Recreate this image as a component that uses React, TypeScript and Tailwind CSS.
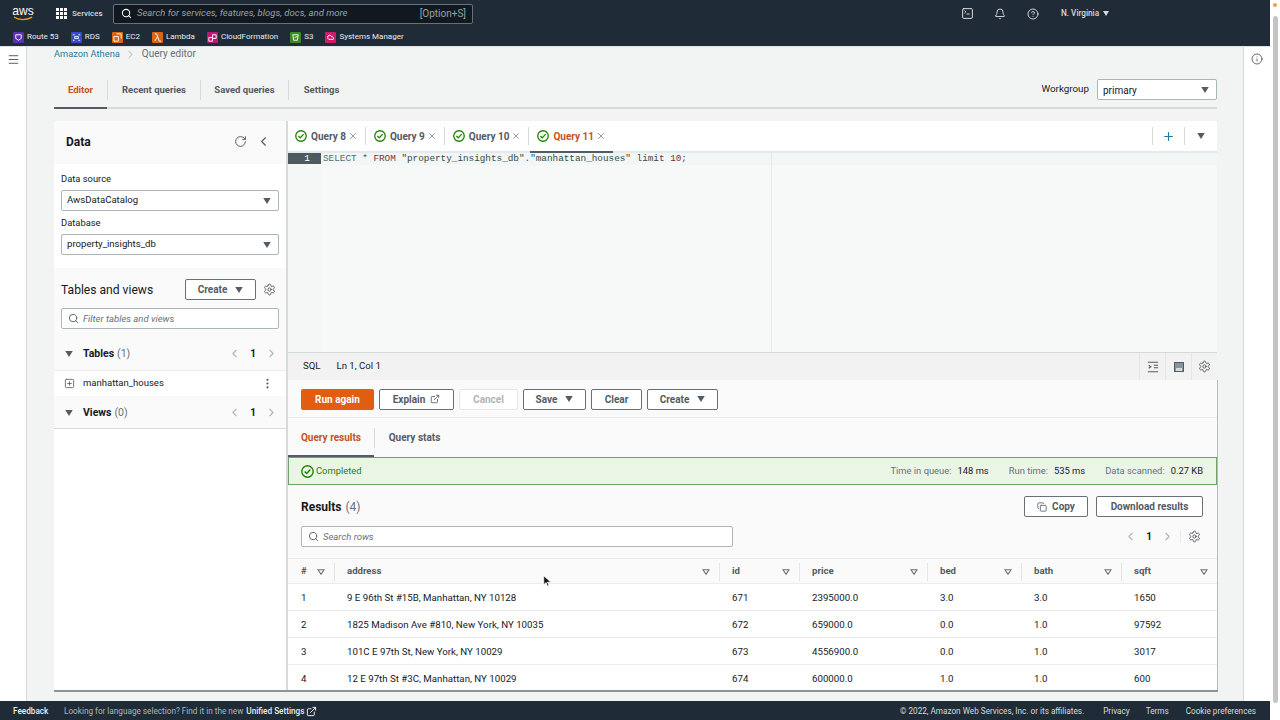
import React from "react";
import { Bell, ChevronLeft, ChevronRight, CircleHelp, Copy, EllipsisVertical, ExternalLink, Info, Menu, Plus, RotateCw, Search, Settings, SquarePlus, SquareTerminal, X } from "lucide-react";

const Caret = ({ className = "" }: { className?: string }) => (
    <svg viewBox="0 0 10 8" className={`w-[8px] h-[6px] fill-[#545b64] ${className}`}>
        <path d="M0 0h10L5 8z" />
    </svg>
);

const SortCaret = () => (
    <svg viewBox="0 0 10 8" className="w-[8px] h-[6px] fill-none stroke-[#687078] stroke-[1.5]">
        <path d="M1 1h8L5 7z" />
    </svg>
);

const CheckCircle = ({ className = "w-[13px] h-[13px]" }: { className?: string }) => (
    <svg viewBox="0 0 16 16" className={`${className} fill-none stroke-[#1d8102] stroke-[1.7]`}>
        <circle cx="8" cy="8" r="7" />
        <path d="M4.5 8l2.5 2.5 4.5-5" />
    </svg>
);

const Gear = () => <Settings size={13} strokeWidth={1.8} className="text-[#545b64]" />;

const Btn = ({ children, className = "" }: { children: React.ReactNode; className?: string }) => (
    <div className={`h-[21px] flex items-center justify-center gap-[5px] rounded-[2px] border border-[#687078] bg-white text-[10px] font-bold text-[#545b64] ${className}`}>
        {children}
    </div>
);

const Select = ({ value }: { value: string }) => (
    <div className="h-[21px] flex items-center justify-between pl-[5px] pr-[7px] rounded-[2px] border border-[#aab7b8] bg-white text-[9.6px] text-[#16191f]">
        <span>{value}</span>
        <Caret />
    </div>
);

const Pager = () => (
    <div className="flex items-center gap-[9px] text-[#aab7b8]">
        <ChevronLeft size={13} />
        <span className="text-[10px] font-bold text-[#16191f]">1</span>
        <ChevronRight size={13} />
    </div>
);

const services = [
    { name: "Route 53", bg: "bg-[#5a30b5]", d: "M3 3h6v4l-3 2-3-2z" },
    { name: "RDS", bg: "bg-[#3b48cc]", d: "M2 3h2M8 3h2M2 9h2M8 9h2M4 5h4v2H4z" },
    { name: "EC2", bg: "bg-[#d86613]", d: "M5 2h5v5M2 5h5v5H2z" },
    { name: "Lambda", bg: "bg-[#d86613]", d: "M3 2h2l3 8h2M6 5l-3 5" },
    { name: "CloudFormation", bg: "bg-[#c7156f]", d: "M2 6h4v4H2zM6 3h4v4H6z" },
    { name: "S3", bg: "bg-[#3f8624]", d: "M3 3h6l-1 6H4zM5 6l3-1" },
    { name: "Systems Manager", bg: "bg-[#d1186b]", d: "M3 6a2 2 0 0 1 4-1 2 2 0 0 1 2 3H4a2 2 0 0 1-1-2z" },
];

const tabs = [
    { name: "Query 8", active: false },
    { name: "Query 9", active: false },
    { name: "Query 10", active: false },
    { name: "Query 11", active: true },
];

const columns = [
    { name: "#", w: "w-[46px]" },
    { name: "address", w: "w-[385px]" },
    { name: "id", w: "w-[80px]" },
    { name: "price", w: "w-[128px]" },
    { name: "bed", w: "w-[94px]" },
    { name: "bath", w: "w-[100px]" },
    { name: "sqft", w: "w-[96px]" },
];

const rows = [
    ["1", "9 E 96th St #15B, Manhattan, NY 10128", "671", "2395000.0", "3.0", "3.0", "1650"],
    ["2", "1825 Madison Ave #810, New York, NY 10035", "672", "659000.0", "0.0", "1.0", "97592"],
    ["3", "101C E 97th St, New York, NY 10029", "673", "4556900.0", "0.0", "1.0", "3017"],
    ["4", "12 E 97th St #3C, Manhattan, NY 10029", "674", "600000.0", "1.0", "1.0", "600"],
];

export default function App() {
    return (
        <div className="relative w-[1280px] h-[720px] overflow-hidden flex flex-col bg-[#f2f3f3] font-['Roboto',sans-serif] text-[#16191f]">
            <header className="h-[47px] shrink-0 bg-[#202b38] border-b border-[#dfe3e6] mr-[10px] flex flex-col">
                <div className="h-[27px] flex items-center pl-[12px]">
                    <div className="w-[22px] flex flex-col items-center leading-none">
                        <span className="text-[12px] leading-[10px] font-['Liberation_Sans',sans-serif] text-white">aws</span>
                        <svg viewBox="0 0 22 5" className="w-[21px] h-[5px] fill-none stroke-[#ff9900] stroke-[1.4]">
                            <path d="M1 1c5 3.5 13 3.5 19 0" />
                        </svg>
                    </div>
                    <div className="ml-[22px] grid grid-cols-3 gap-[1.5px] w-[11px]">
                        {Array.from({ length: 9 }).map((_, i) => (
                            <div key={i} className="w-[2.5px] h-[2.5px] bg-white" />
                        ))}
                    </div>
                    <span className="ml-[5px] w-[30px] text-[8px] font-medium text-[#d5dbdb]">Services</span>
                    <div className="ml-[11px] w-[360px] h-[20px] flex items-center pl-[7px] pr-[6px] bg-[#12181f] border border-[#687078] rounded-[2px]">
                        <Search size={11} strokeWidth={2.2} className="text-white" />
                        <span className="ml-[5px] text-[9.5px] italic text-[#95a5a6]">Search for services, features, blogs, docs, and more</span>
                        <span className="ml-auto text-[10px] text-[#95a5a6]">[Option+S]</span>
                    </div>
                    <div className="ml-[488px] flex items-center">
                        <SquareTerminal size={13} strokeWidth={1.7} className="text-[#e9ebed]" />
                        <Bell size={12} strokeWidth={1.7} className="ml-[20px] text-[#e9ebed]" />
                        <CircleHelp size={12} strokeWidth={1.7} className="ml-[21px] text-[#e9ebed]" />
                        <span className="ml-[22px] text-[8.2px] font-medium text-[#d5dbdb]">N. Virginia</span>
                        <svg viewBox="0 0 10 8" className="ml-[4px] w-[6px] h-[5px] fill-[#d5dbdb]"><path d="M0 0h10L5 8z" /></svg>
                    </div>
                </div>
                <div className="h-[19px] flex items-center pl-[13px] pt-px gap-[12px]">
                    {services.map((s) => (
                        <div key={s.name} className="flex items-center gap-[3px]">
                            <div className={`w-[11px] h-[11px] rounded-[1px] ${s.bg}`}>
                                <svg viewBox="0 0 12 12" className="w-[11px] h-[11px] fill-none stroke-white stroke-[1]"><path d={s.d} /></svg>
                            </div>
                            <span className="text-[8px] text-[#e9ebed]">{s.name}</span>
                        </div>
                    ))}
                </div>
            </header>

            <div className="flex-1 min-h-0 flex mr-[10px]">
                <aside className="w-[27px] shrink-0 bg-white border-r border-[#d5dbdb] pt-[6px] flex justify-center">
                    <Menu size={13} strokeWidth={1.8} className="text-[#545b64]" />
                </aside>

                <main className="flex-1 min-w-0 pl-[27px] pr-[26px] flex flex-col">
                    <div className="h-[12px] pt-[2px] flex items-center leading-none">
                        <span className="text-[9.3px] text-[#2b7a9e]">Amazon Athena</span>
                        <ChevronRight size={13} strokeWidth={1.2} className="ml-[4px] mr-[5px] text-[#879596]" />
                        <span className="text-[10px] text-[#687078]">Query editor</span>
                    </div>

                    <div className="mt-[13px] h-[37px] flex items-center border-b-2 border-[#d5dbdb] text-[9.5px] font-bold text-[#545b64]">
                        <div className="relative w-[53px] h-full pt-px flex items-center justify-center text-[#c7511f]">
                            Editor
                            <div className="absolute left-0 right-0 -bottom-[2px] h-[2px] bg-[#545b64]" />
                        </div>
                        <div className="w-px h-[20px] bg-[#d5dbdb]" />
                        <div className="w-[92px] pt-px text-center">Recent queries</div>
                        <div className="w-px h-[20px] bg-[#d5dbdb]" />
                        <div className="w-[87px] pt-px text-center">Saved queries</div>
                        <div className="w-px h-[20px] bg-[#d5dbdb]" />
                        <div className="w-[65px] pt-px text-center">Settings</div>
                        <span className="ml-auto text-[9.8px] font-normal text-[#16191f]">Workgroup</span>
                        <div className="ml-[8px] w-[120px] h-[21px] flex items-center justify-between pl-[5px] pr-[7px] rounded-[2px] border border-[#aab7b8] bg-white text-[10px] font-normal text-[#16191f]">
                            <span className="pt-px">primary</span>
                            <Caret />
                        </div>
                    </div>

                    <div className="mt-[12px] h-[571px] -mr-px flex overflow-hidden border-b-2 border-[#8a9796]">
                        <section className="w-[234px] shrink-0 bg-white border-r-2 border-[#d5dbdb] flex flex-col">
                            <div className="h-[43px] shrink-0 bg-[#fafafa] flex items-center pb-[2px] pl-[12px] pr-[15px]">
                                <span className="text-[12px] font-bold">Data</span>
                                <RotateCw size={13} strokeWidth={1.8} className="ml-auto text-[#545b64]" />
                                <ChevronLeft size={15} strokeWidth={1.8} className="ml-[9px] text-[#545b64]" />
                            </div>
                            <div className="h-[104px] shrink-0 px-[7px] pt-[8px]">
                                <div className="text-[9.4px] leading-[14px] text-[#16191f] mb-[4px]">Data source</div>
                                <Select value="AwsDataCatalog" />
                                <div className="text-[9.4px] leading-[14px] text-[#16191f] mt-[5px] mb-[4px]">Database</div>
                                <Select value="property_insights_db" />
                            </div>
                            <div className="h-[103px] shrink-0 bg-[#fafafa] border-b border-[#eaeded] px-[7px] pt-[11px]">
                                <div className="flex items-center">
                                    <span className="text-[12.1px] leading-[16px]">Tables and views</span>
                                    <Btn className="ml-auto w-[71px]">Create <Caret className="ml-[3px]" /></Btn>
                                    <span className="ml-[7px] mr-[3px] flex"><Gear /></span>
                                </div>
                                <div className="mt-[8px] h-[21px] flex items-center pl-[6px] rounded-[2px] border border-[#aab7b8] bg-white">
                                    <Search size={11} strokeWidth={2} className="text-[#545b64]" />
                                    <span className="ml-[4px] pt-px text-[9.5px] italic text-[#687078]">Filter tables and views</span>
                                </div>
                                <div className="mt-[17px] flex items-center pl-[4px] pr-[1px]">
                                    <Caret />
                                    <span className="ml-[10px] text-[10.5px] font-bold">Tables</span>
                                    <span className="ml-[3px] text-[10.5px] text-[#687078]">(1)</span>
                                    <div className="ml-auto"><Pager /></div>
                                </div>
                            </div>
                            <div className="h-[25px] shrink-0 flex items-center pl-[10px] pr-[12px]">
                                <SquarePlus size={11} strokeWidth={1.8} className="text-[#545b64]" />
                                <span className="ml-[8px] text-[9.5px]">manhattan_houses</span>
                                <EllipsisVertical size={13} className="ml-auto text-[#545b64]" />
                            </div>
                            <div className="h-[33px] shrink-0 pt-px bg-[#fafafa] border-b border-[#d5dbdb] flex items-center pl-[11px] pr-[8px]">
                                <Caret />
                                <span className="ml-[10px] text-[10.5px] font-bold">Views</span>
                                <span className="ml-[3px] text-[10.5px] text-[#687078]">(0)</span>
                                <div className="ml-auto"><Pager /></div>
                            </div>
                        </section>

                        <section className="flex-1 min-w-0 flex flex-col">
                            <div className="h-[32px] mr-px shrink-0 bg-white border-b-2 border-[#e4e9e9] flex items-center pl-[7px] text-[10px] font-bold text-[#545b64]">
                                {tabs.map((t, i) => (
                                    <React.Fragment key={t.name}>
                                        {i > 0 && <div className="w-px h-[18px] bg-[#d5dbdb] ml-[7px] mr-[8px]" />}
                                        <div className={`relative h-full flex items-center ${t.active ? "text-[#c7511f]" : ""}`}>
                                            <CheckCircle className="w-[12px] h-[12px]" />
                                            <span className="ml-[4px] mr-[2px]">{t.name}</span>
                                            <X size={10} strokeWidth={1.5} className="text-[#545b64]" />
                                            {t.active && <div className="absolute -left-[7px] right-[-7px] bottom-[-2px] h-[2px] bg-[#545b64]" />}
                                        </div>
                                    </React.Fragment>
                                ))}
                                <div className="ml-auto w-px h-[18px] bg-[#d5dbdb]" />
                                <div className="w-[31px] flex justify-center"><Plus size={13} strokeWidth={2.2} className="text-[#1b7a9c]" /></div>
                                <div className="w-px h-[18px] bg-[#d5dbdb]" />
                                <div className="w-[32px] flex justify-center"><Caret /></div>
                            </div>

                            <div className="relative h-[199px] mr-px shrink-0 bg-[#f7f9f9] flex">
                                <div className="w-[33px] shrink-0 bg-[#f5f6f6]">
                                    <div className="h-[11px] bg-[#4d5a60] text-right pr-[11px] text-[9.5px] leading-[11px] font-['Liberation_Mono',monospace] text-white">1</div>
                                </div>
                                <div className="pl-[2px] w-full h-[12px] bg-[#f3f6f6] text-[9.33px] leading-[12px] whitespace-pre font-['Liberation_Mono',monospace] text-[#41484e]">
                                    <span className="text-[#5a6b70]">SELECT</span> * <span className="text-[#7a2e2e]">FROM</span> <span className="text-[#2f4f3f]">"property_insights_db"</span>.<span className="text-[#2f4f3f]">"manhattan_houses"</span> limit <span className="text-[#7a2e2e]">10</span>;
                                </div>
                                <div className="absolute left-[483px] top-0 bottom-0 w-px bg-[#e6e9e9]" />
                            </div>

                            <div className="h-[28px] mr-px shrink-0 bg-[#f2f2f2] border-t border-[#d5dbdb] flex items-center pl-[15px] text-[9.6px] text-[#16191f]">
                                <span>SQL</span>
                                <span className="ml-[16px]">Ln 1, Col 1</span>
                                <div className="ml-auto flex items-center text-[#545b64]">
                                    <div className="w-[26px] h-[28px] border-l border-[#e4e7e7] flex items-center justify-center">
                                        <svg viewBox="0 0 14 14" className="w-[12px] h-[12px] fill-none stroke-[#545b64] stroke-[1.2]"><path d="M1 1.5h12M8 5h5M8 8h5M1 12.5h12M2 5l2.5 1.7L2 8.4" /></svg>
                                    </div>
                                    <div className="w-[26px] h-[28px] border-l border-[#e4e7e7] flex items-center justify-center">
                                        <div className="w-[10px] h-[10px] bg-[#879596] border border-[#545b64] flex items-end justify-center"><div className="w-[6px] h-[3px] bg-[#d5dbdb]" /></div>
                                    </div>
                                    <div className="w-[26px] h-[28px] border-l border-[#e4e7e7] flex items-center justify-center"><Gear /></div>
                                </div>
                            </div>

                            <div className="flex-1 min-h-0 bg-[#fafafa] border-r border-[#b5bcbd] flex flex-col">
                                <div className="h-[38px] shrink-0 border-b border-[#eaeded] flex items-center pl-[13px] pt-[1px] gap-[5px]">
                                    <div className="w-[73px] h-[21px] flex items-center justify-center rounded-[2px] bg-[#e05d12] text-[10px] font-bold text-white">Run again</div>
                                    <Btn className="w-[75px]">Explain <ExternalLink size={10} strokeWidth={2} /></Btn>
                                    <div className="w-[59px] h-[21px] flex items-center justify-center rounded-[2px] border border-[#e4e7e7] bg-white text-[10px] font-bold text-[#aab7b8]">Cancel</div>
                                    <Btn className="w-[63px]">Save <Caret className="ml-[3px]" /></Btn>
                                    <Btn className="w-[51px]">Clear</Btn>
                                    <Btn className="w-[71px]">Create <Caret className="ml-[3px]" /></Btn>
                                </div>

                                <div className="h-[39px] shrink-0 flex items-center text-[10px] font-bold text-[#545b64]">
                                    <div className="relative w-[86px] h-full flex items-center justify-center text-[#c7511f]">
                                        Query results
                                        <div className="absolute left-0 right-0 bottom-0 h-[2px] bg-[#545b64]" />
                                    </div>
                                    <div className="w-px h-[20px] bg-[#d5dbdb]" />
                                    <div className="w-[79px] text-center">Query stats</div>
                                </div>

                                <div className="h-[28px] shrink-0 bg-[#eaf5e6] border border-[#6fa36a] flex items-center pl-[12px] pr-[13px] text-[9.4px] text-[#687078]">
                                    <CheckCircle />
                                    <span className="ml-[2px] text-[#1d8102]">Completed</span>
                                    <span className="ml-auto">Time in queue:</span>
                                    <span className="ml-[6px] text-[#16191f]">148 ms</span>
                                    <span className="ml-[20px]">Run time:</span>
                                    <span className="ml-[6px] text-[#16191f]">535 ms</span>
                                    <span className="ml-[20px]">Data scanned:</span>
                                    <span className="ml-[6px] text-[#16191f]">0.27 KB</span>
                                </div>

                                <div className="h-[73px] shrink-0 pl-[13px] pr-[14px] pt-[11px]">
                                    <div className="flex items-center">
                                        <span className="text-[12px] font-bold">Results</span>
                                        <span className="ml-[4px] text-[12px] text-[#687078]">(4)</span>
                                        <Btn className="ml-auto w-[64px]"><Copy size={10} strokeWidth={2} /> Copy</Btn>
                                        <Btn className="ml-[8px] w-[107px]">Download results</Btn>
                                    </div>
                                    <div className="mt-[9px] flex items-center">
                                        <div className="w-[432px] h-[21px] flex items-center pl-[6px] rounded-[2px] border border-[#aab7b8] bg-white">
                                            <Search size={11} strokeWidth={2} className="text-[#545b64]" />
                                            <span className="ml-[4px] pt-px text-[9.5px] italic text-[#687078]">Search rows</span>
                                        </div>
                                        <div className="ml-auto flex items-center">
                                            <Pager />
                                            <div className="ml-[6px] mr-[2px] border-l border-[#eaeded] pl-[7px] flex"><Gear /></div>
                                        </div>
                                    </div>
                                </div>

                                <div className="h-[26px] shrink-0 pt-px border-y border-[#eaeded] flex items-center text-[9.6px] font-bold text-[#545b64]">
                                    {columns.map((c, i) => (
                                        <div key={c.name} className={`${c.w} h-[18px] flex items-center justify-between pr-[9px] ${i > 0 ? "pl-[12px] border-l border-[#e4e7e7]" : "pl-[13px]"}`}>
                                            <span>{c.name}</span>
                                            <SortCaret />
                                        </div>
                                    ))}
                                </div>

                                {rows.map((r, ri) => (
                                    <div key={r[0]} className={`h-[27px] shrink-0 flex items-center bg-white text-[9.7px] ${ri < 3 ? "pt-[2px] border-b border-[#eaeded]" : "pt-px"}`}>
                                        {r.map((v, i) => (
                                            <div key={i} className={`${columns[i].w} pl-[13px]`}>{v}</div>
                                        ))}
                                    </div>
                                ))}
                            </div>
                        </section>
                    </div>
                </main>

                <aside className="w-[27px] shrink-0 bg-white border-l border-[#d5dbdb] pt-[6px] flex justify-center">
                    <Info size={12} strokeWidth={1.8} className="text-[#545b64]" />
                </aside>
            </div>

            <footer className="h-[19px] shrink-0 bg-[#202b38] mr-[10px] pt-px flex items-center pl-[13px] pr-[14px] text-[8.2px] text-[#aab7b8]">
                <span className="w-[51px] font-medium text-[#e9ebed]">Feedback</span>
                <span>Looking for language selection? Find it in the new</span>
                <span className="ml-[3px] font-medium text-[#e9ebed]">Unified Settings</span>
                <ExternalLink size={11} strokeWidth={2} className="ml-[2px] text-white" />
                <span className="ml-auto text-[#d5dbdb]">© 2022, Amazon Web Services, Inc. or its affiliates.</span>
                <span className="ml-[19px] text-[#d5dbdb]">Privacy</span>
                <span className="ml-[16px] text-[#d5dbdb]">Terms</span>
                <span className="ml-[17px] text-[#d5dbdb]">Cookie preferences</span>
            </footer>

            {/* window scrollbar */}
            <div className="absolute right-0 top-0 bottom-0 w-[10px] bg-white">
                <div className="absolute left-[3px] top-[3px] w-[4px] h-[4px] rounded-full bg-[#f0a040]" />
                <div className="absolute left-[3px] top-[16px] bottom-[17px] w-[5px] rounded-full bg-[#c4c4c4]" />
            </div>

            {/* mouse pointer */}
            <svg viewBox="0 0 12 16" className="absolute left-[543px] top-[575px] w-[9px] h-[12px]">
                <path d="M1 1v12l3-3 2 5 2-1-2-4.5h4.5z" fill="#111" stroke="#fff" strokeWidth="1" />
            </svg>
        </div>
    );
}
